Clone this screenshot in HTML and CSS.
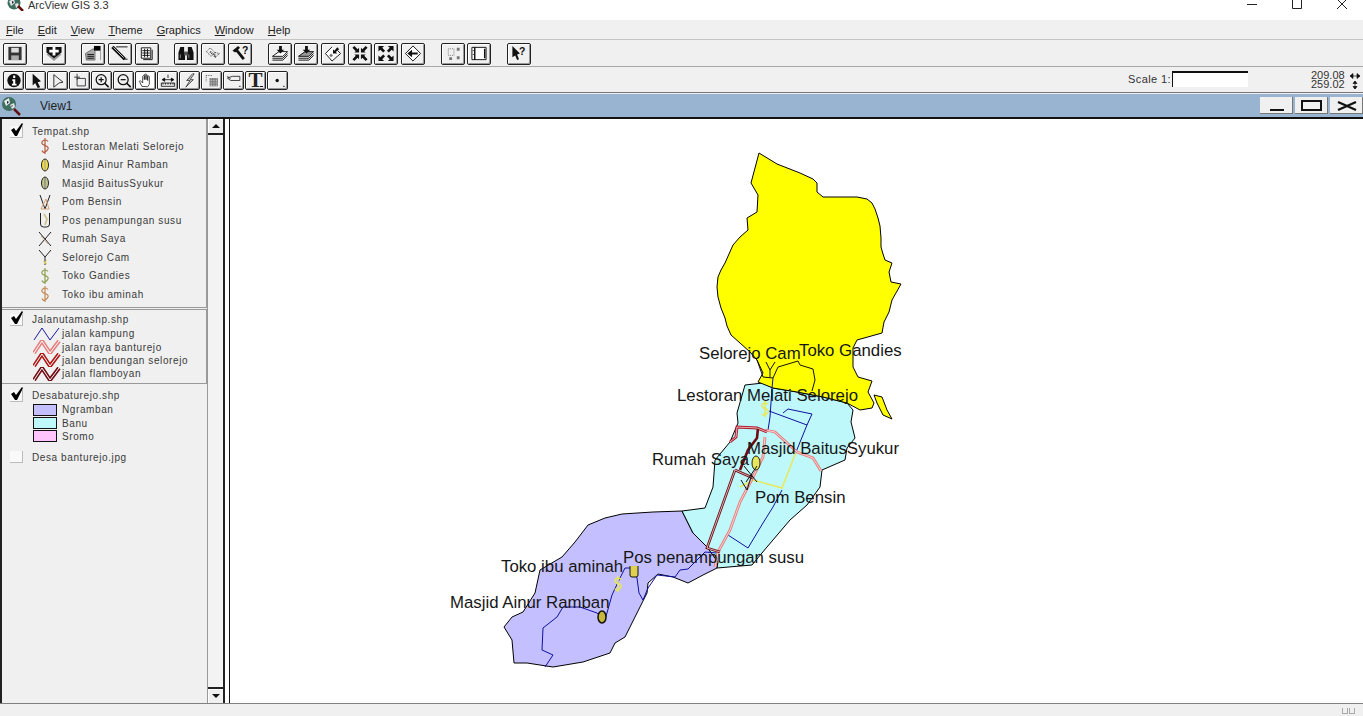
FILE: index.html

```html
<!DOCTYPE html>
<html lang="en">
<head>
  <meta charset="UTF-8">
  <title>ArcView GIS 3.3</title>
  <link rel="stylesheet" href="styles.css">
</head>
<body>

<header class="titlebar">
  <svg class="app-icon" viewBox="0 0 18 11"><circle cx="8" cy="3" r="6.500" fill="#3d6e5e"/><path d="M3 1l5-2 1 4-4 3zM9 4l3-1 1 3-3 2z" fill="#e4e4e4"/><path d="M6 1l2 1-2 2z" fill="#123"/><path d="M12 6l5 5" stroke="#611" stroke-width="2.500"/></svg>
  <span class="app-name">ArcView GIS 3.3</span>
  <div class="win-controls">
    <svg viewBox="0 0 10 10"><path d="M0 4.500h10" stroke="#222"/></svg>
    <svg viewBox="0 0 10 10"><path d="M.5 -2h9v10.500h-9z" fill="none" stroke="#222"/></svg>
    <svg viewBox="0 0 10 10"><path d="M0 -1l10 10M10 -1L0 9" stroke="#222"/></svg>
  </div>
</header>

<nav class="menubar">
  <span><u>F</u>ile</span>
  <span><u>E</u>dit</span>
  <span><u>V</u>iew</span>
  <span><u>T</u>heme</span>
  <span><u>G</u>raphics</span>
  <span><u>W</u>indow</span>
  <span><u>H</u>elp</span>
</nav>

<div class="toolbar buttons">
  <button class="tool"><svg viewBox="0 0 18 18"><path d="M2 2h14v14H2z" fill="#333"/><path d="M5 3h8v5H5z" fill="#ddd"/><path d="M5 11h8v5H5z" fill="#aaa"/></svg></button>
  <button class="tool gap-a"><svg viewBox="0 0 18 18"><path d="M1 10l8 7 8-7-3-2-5 4-5-4z" fill="#999"/><path d="M1 2h16v6l-8 6-8-6z" fill="#111"/><path d="M7.500 2h3v3h3.500v3h-3.500v3h-3V8H4V5h3.500z" fill="#fff"/></svg></button>
  <button class="tool gap-b"><svg viewBox="0 0 18 18"><path d="M1 9l8-5 2 1v11H2z" fill="#aaa" stroke="#333" stroke-width=".6"/><path d="M3 10h7M3 12h7M3 14h7" stroke="#111"/><path d="M10 1h7v5h-7z" fill="#000"/><path d="M11 6v10M17 6v10" stroke="#999"/></svg></button>
  <button class="tool"><svg viewBox="0 0 18 18"><path d="M1 2l13 13" stroke="#111" stroke-width="3.500"/><path d="M2 2.500l11 11" stroke="#ccc"/><path d="M5 2h12" stroke="#111"/><path d="M13 15h4" stroke="#111"/></svg></button>
  <button class="tool"><svg viewBox="0 0 18 18"><path d="M3 3h10v11H3z" fill="#fff" stroke="#111"/><path d="M4 6h8M4 8.500h8M4 11h8M6.500 4v9M9.500 4v9" stroke="#111"/><path d="M14.500 5v10.500H5" fill="none" stroke="#111"/></svg></button>
  <button class="tool gap-b"><svg viewBox="0 0 18 18"><path d="M3 2h4v5l1 1v8H1V8zM11 2h4l2 6v8h-7V8l1-1z" fill="#111"/><path d="M7 7h4v4H7z" fill="#555"/><path d="M3 10v4M12 10v4" stroke="#888"/></svg></button>
  <button class="tool"><svg viewBox="0 0 18 18"><path d="M2 7l4-4 5 5-4 4zM11 8l5 1-5 4z" fill="none" stroke="#333" stroke-dasharray="1 1"/><path d="M6 7l6 6" stroke="#333" stroke-dasharray="1 1" stroke-width="2"/></svg></button>
  <button class="tool"><svg viewBox="0 0 18 18"><path d="M1 6l6-5 2 2-5 5z" fill="#111"/><path d="M5 5l8 10" stroke="#111" stroke-width="3"/><text x="11" y="9" class="ico-q">?</text></svg></button>
  <button class="tool gap-b"><svg viewBox="0 0 18 18"><path d="M1 12l7-5h9l-5 5z" fill="#fff" stroke="#111"/><path d="M1 14h11l5-5M1 16h11l5-5" fill="none" stroke="#111"/><path d="M8 1h3v4h2.500L9.500 9l-4-4H8z" fill="#111"/></svg></button>
  <button class="tool"><svg viewBox="0 0 18 18"><path d="M1 12l7-5h9l-5 5z" fill="#999" stroke="#111"/><path d="M1 14h11l5-5M1 16h11l5-5" fill="none" stroke="#111"/><path d="M8 1h3v4h2.500L9.500 9l-4-4H8z" fill="#111"/></svg></button>
  <button class="tool"><svg viewBox="0 0 18 18"><path d="M8 2L1 9l7 8 9-8-3-3" fill="#fff" stroke="#111"/><path d="M7 9l2 2-2 2-2-2z" fill="#777"/><path d="M9 9V4.500l1.500 1.500 3-3.500 2 2-3.500 3 1.500 1.500z" fill="#111"/></svg></button>
  <button class="tool"><svg viewBox="0 0 18 18"><path d="M8 8H3l1.500-1.500L1 3l2-2 3.500 3.500L8 3zM10 8h5l-1.500-1.500L17 3l-2-2-3.500 3.500L10 3zM8 10H3l1.500 1.500L1 15l2 2 3.500-3.500L8 15zM10 10h5l-1.500 1.500L17 15l-2 2-3.500-3.500L10 15z" fill="#111"/></svg></button>
  <button class="tool"><svg viewBox="0 0 18 18"><path d="M1 1h6L5 3l3 3-2 2-3-3-2 2zM17 1h-6l2 2-3 3 2 2 3-3 2 2zM1 17h6l-2-2 3-3-2-2-3 3-2-2zM17 17h-6l2-2-3-3 2-2 3 3 2-2z" fill="#111"/></svg></button>
  <button class="tool"><svg viewBox="0 0 18 18"><path d="M9 1l8 8-8 8-8-8z" fill="#fff" stroke="#111"/><path d="M3 9l5-4v3h6v2H8v3z" fill="#111"/></svg></button>
  <button class="tool gap-b"><svg viewBox="0 0 18 18"><path d="M4 4h6v7H4z" fill="none" stroke="#777" stroke-dasharray="1 1"/><path d="M13 3h3v3h-3zM13 12h3v3h-3zM5 13h3v3H5z" fill="#777"/></svg></button>
  <button class="tool"><svg viewBox="0 0 18 18"><path d="M1.500 2.500h15v13h-15z" fill="#fff" stroke="#111"/><path d="M4.500 2v14M15 4v10" stroke="#111" stroke-width="1.500"/><path d="M2.500 6h1M2.500 10h1" stroke="#111"/></svg></button>
  <button class="tool gap-b"><svg viewBox="0 0 18 18"><path d="M2 1l8 8-3 1 2 5-2 1-2-5-3 2z" fill="#111"/><text x="9" y="11" class="ico-q">?</text></svg></button>
</div>

<div class="toolbar small">
  <button class="tool"><svg viewBox="0 0 18 18"><circle cx="9" cy="9" r="8" fill="#111"/><path d="M8 3h2.500v3H8zM7 7.500h3.500V13H12v2H6.500v-2H8V9.500H7z" fill="#fff"/></svg></button>
  <button class="tool"><svg viewBox="0 0 18 18"><path d="M5 1l10 9-4 1 3 6-3 1-3-6-3 3z" fill="#111"/></svg></button>
  <button class="tool"><svg viewBox="0 0 18 18"><path d="M4 2l11 9-5 1-1 1-5 4z" fill="#f0f0f0" stroke="#111"/></svg></button>
  <button class="tool"><svg viewBox="0 0 18 18"><path d="M5.500 6.500h10v9h-10z" fill="none" stroke="#222"/><path d="M2 5h7M5.500 1v7" stroke="#222"/></svg></button>
  <button class="tool"><svg viewBox="0 0 18 18"><circle cx="8" cy="8" r="6" fill="none" stroke="#111" stroke-width="1.500"/><path d="M5 8h6M8 5v6" stroke="#111" stroke-width="1.500"/><path d="M12 12l5 5" stroke="#111" stroke-width="2"/></svg></button>
  <button class="tool"><svg viewBox="0 0 18 18"><circle cx="8" cy="8" r="6" fill="none" stroke="#111" stroke-width="1.500"/><path d="M5 8h6" stroke="#111" stroke-width="1.500"/><path d="M12 12l5 5" stroke="#111" stroke-width="2"/></svg></button>
  <button class="tool active"><svg viewBox="0 0 18 18"><path d="M4 16L1 10l1-1 3 3V4l1-1 1 1v4V2l1-1 1 1v6V2.500l1-.5 1 1v6-5l1-.5 1 1v9l-2 3z" fill="#fff" stroke="#111" stroke-width=".9"/></svg></button>
  <button class="tool"><svg viewBox="0 0 18 18"><path d="M1 12h16v4H1z" fill="#f0f0f0" stroke="#111"/><path d="M3 12v2M6 12v2M9 12v2M12 12v2M15 12v2" stroke="#111"/><path d="M2 8h14M2 8l3-2v4zM16 8l-3-2v4zM9 2v4" stroke="#111"/></svg></button>
  <button class="tool"><svg viewBox="0 0 18 18"><path d="M12 1L5 9h4l-5 8 9-9H9l5-7z" fill="none" stroke="#333"/><path d="M11 3L7 8M11 9l-4 5" stroke="#777"/></svg></button>
  <button class="tool"><svg viewBox="0 0 18 18"><path d="M2 3h8M2 3v8" stroke="#444" stroke-dasharray="1 1"/><path d="M6 6h10v10H6z" fill="#777"/><path d="M6 7h10M6 9h10M6 11h10M6 13h10M6 15h10" stroke="#ddd" stroke-dasharray="1 1"/></svg></button>
  <button class="tool"><svg viewBox="0 0 18 18"><path d="M1 6l4 3h11V4H7z" fill="none" stroke="#222"/><path d="M1 4l4 3" stroke="#222"/><path d="M15 16h2" stroke="#111"/></svg></button>
  <button class="tool tool-t">T<i class="dot-mark"></i></button>
  <button class="tool"><svg viewBox="0 0 18 18"><circle cx="8" cy="9" r="2" fill="#111"/><path d="M15 16h2" stroke="#111"/></svg></button>

  <div class="scale">
    <label>Scale 1:</label>
    <span class="scale-box"></span>
  </div>
  <div class="coords">
    <div>209.08 <svg viewBox="0 0 10 8"><path d="M0 4h10M0 4l3-2.500v5zM10 4L7 1.500v5z" fill="#111" stroke="#111" stroke-width=".7"/></svg></div>
    <div>259.02 <svg viewBox="0 0 10 8"><path d="M5 0v8M5 0L3 2.500h4zM5 8L3 5.500h4z" fill="#111" stroke="#111" stroke-width=".7"/></svg></div>
  </div>
</div>

<div class="view-title">
  <svg class="view-icon" viewBox="0 0 20 20"><circle cx="8" cy="8" r="7" fill="#3d6e5e"/><path d="M3 5l5-3 1 5-4 3zM9 9l4-2 1 4-3 2z" fill="#e8e8e8"/><path d="M6 5l2 1-2 2zM10 10l2-1-1 2z" fill="#123"/><path d="M13 13l6 6" stroke="#611" stroke-width="2.500"/></svg>
  <span class="view-name">View1</span>
  <div class="view-buttons">
    <button class="view-btn"><i class="ic-min"></i></button>
    <button class="view-btn"><i class="ic-max"></i></button>
    <button class="view-btn"><svg viewBox="0 0 20 10" width="20" height="10"><path d="M1 1l9 4-9 4M19 1l-9 4 9 4" fill="none" stroke="#111" stroke-width="2.200"/></svg></button>
  </div>
</div>

<main class="workarea">
  <aside class="toc">
    <div class="toc-list">
      <section class="theme first">
        <div class="theme-head"><span class="check"><svg viewBox="0 0 14 14"><path d="M1 7l3-2 2 3 6-8 1 1-6 12H5z" fill="#000"/></svg></span>Tempat.shp</div>
        <div class="pt-row"><span class="pt-sym"><svg viewBox="0 0 14 18"><path class="dollar" stroke="#b25c42" d="M10 4.500Q9 3 7 3T4 5t3 3.500 3 3.500-3 3-3-1.500M7 1v16"/></svg></span>Lestoran Melati Selorejo</div>
        <div class="pt-row"><span class="pt-sym"><svg viewBox="0 0 14 18"><ellipse cx="7" cy="9" rx="3.500" ry="6" fill="#ece04a" stroke="#222"/><path d="M7 4v10" stroke="#a99"/></svg></span>Masjid Ainur Ramban</div>
        <div class="pt-row"><span class="pt-sym"><svg viewBox="0 0 14 18"><ellipse cx="7" cy="9" rx="3.500" ry="6" fill="#c2c58e" stroke="#222"/><path d="M7 4v10" stroke="#777"/></svg></span>Masjid BaitusSyukur</div>
        <div class="pt-row"><span class="pt-sym"><svg viewBox="0 0 14 18"><path d="M2 2l5 14 5-14" fill="none" stroke="#222"/><path d="M3 16l5-10 3 10z" fill="none" stroke="#d9a070"/></svg></span>Pom Bensin</div>
        <div class="pt-row"><span class="pt-sym"><svg viewBox="0 0 14 18"><path d="M2.500 2v11q0 3 3 3h3q3 0 3-3V2" fill="none" stroke="#222"/><path d="M6 3l3 5-2 6" fill="none" stroke="#c8c080" stroke-width="1.500"/></svg></span>Pos penampungan susu</div>
        <div class="pt-row"><span class="pt-sym"><svg viewBox="0 0 14 18"><path d="M1 2l12 14M13 2L1 16" stroke="#222"/><path d="M3 6l7 8" stroke="#d9b090"/></svg></span>Rumah Saya</div>
        <div class="pt-row"><span class="pt-sym"><svg viewBox="0 0 14 18"><path d="M1 2l6 7 6-7M7 9v8" fill="none" stroke="#222"/><path d="M5 13l4 3M9 12l-3 4" stroke="#e7df60"/></svg></span>Selorejo Cam</div>
        <div class="pt-row"><span class="pt-sym"><svg viewBox="0 0 14 18"><path class="dollar" stroke="#8e9e50" d="M10 4.500Q9 3 7 3T4 5t3 3.500 3 3.500-3 3-3-1.500M7 1v16"/></svg></span>Toko Gandies</div>
        <div class="pt-row"><span class="pt-sym"><svg viewBox="0 0 14 18"><path class="dollar" stroke="#c08a58" d="M10 4.500Q9 3 7 3T4 5t3 3.500 3 3.500-3 3-3-1.500M7 1v16"/></svg></span>Toko ibu aminah</div>
      </section>

      <section class="theme lines">
        <div class="theme-head"><span class="check"><svg viewBox="0 0 14 14"><path d="M1 7l3-2 2 3 6-8 1 1-6 12H5z" fill="#000"/></svg></span>Jalanutamashp.shp</div>
        <div class="ln-row"><svg class="ln-sym" viewBox="0 0 28 14"><path d="M1 13L9 1l8 12 9-12" fill="none" stroke="#1a1aa0"/></svg>jalan kampung</div>
        <div class="ln-row"><svg class="ln-sym" viewBox="0 0 28 14"><path d="M1 13L9 1l8 12 9-12" fill="none" stroke="#e88080" stroke-width="4"/><path d="M1 13L9 1l8 12 9-12" fill="none" stroke="#fff" stroke-width="1"/></svg>jalan raya banturejo</div>
        <div class="ln-row"><svg class="ln-sym" viewBox="0 0 28 14"><path d="M1 13L9 1l8 12 9-12" fill="none" stroke="#b01818" stroke-width="4"/><path d="M1 13L9 1l8 12 9-12" fill="none" stroke="#fff" stroke-width="1"/></svg>jalan bendungan selorejo</div>
        <div class="ln-row"><svg class="ln-sym" viewBox="0 0 28 14"><path d="M1 13L9 1l8 12 9-12" fill="none" stroke="#700c14" stroke-width="4"/><path d="M1 13L9 1l8 12 9-12" fill="none" stroke="#fff" stroke-width="1"/></svg>jalan flamboyan</div>
      </section>

      <section class="theme polys">
        <div class="theme-head"><span class="check"><svg viewBox="0 0 14 14"><path d="M1 7l3-2 2 3 6-8 1 1-6 12H5z" fill="#000"/></svg></span>Desabaturejo.shp</div>
        <div class="ln-row"><span class="swatch ngramban"></span>Ngramban</div>
        <div class="ln-row"><span class="swatch banu"></span>Banu</div>
        <div class="ln-row"><span class="swatch sromo"></span>Sromo</div>
      </section>

      <section class="theme image">
        <div class="theme-head"><span class="check"></span>Desa banturejo.jpg</div>
      </section>
    </div>
    <div class="scrollbar">
      <button class="sb-btn"><i class="arrow-up"></i></button>
      <div class="sb-track"></div>
      <button class="sb-btn"><i class="arrow-down"></i></button>
    </div>
  </aside>

  <section class="map">
    <svg class="map-svg" viewBox="230 119 1133 584">
      <!-- villages -->
      <path class="desa ngramban-f" d="M682 511L653 512 622 514 605 518 588 525 575 542 562 557 540 570 535 593 523 612 512 617 504 627 512 640 514 663 527 663 553 667 583 662 610 653 615 643 625 637 637 613 647 593 648 583 658 574 673 577 688 583 703 575 717 568 718 562 707 547 693 533z"/>
      <path class="desa banu-f" d="M745 385L763 383 773 388 797 392 823 397 847 403 853 410 851 422 855 438 847 448 845 460 822 470 820 487 807 505 790 520 767 547 752 565 717 568 718 562 707 547 693 533 682 511 705 508 713 487 715 460 730 442 738 423 737 413z"/>
      <path class="desa yellow-f" d="M759 153L777 164 800 173 813 179 817 183 817 192 823 197 840 197 857 197 867 199 872 203 875 209 878 218 880 226 881 238 881 247 883 254 885 260 892 263 889 272 891 282 901 284 892 300 889 312 884 322 882 333 857 340 853 348 853 367 858 377 872 381 868 392 874 403 872 408 860 410 847 403 823 397 797 392 773 388 758 382 763 373 757 360 750 352 740 343 731 335 727 326 725 318 721 308 718 297 717 287 718 277 721 270 725 263 729 254 733 245 740 237 748 230 747 218 757 212 758 195 751 183z"/>
      <path class="desa yellow-f" d="M874 395L882 397 887 410 892 419 883 415 877 403z"/>
      <path class="thin" d="M757 360L763 377 773 378 778 367 798 361 800 365 813 369 815 380 812 391"/>

      <!-- roads -->
      <g class="road-blue">
        <path d="M545 667L553 655 542 650 543 628 557 617 563 607 580 607 597 613 605 620 612 595 620 578 625 568 632 568 637 578 639 593 643 600 648 588 657 575 675 577 680 570 688 569 705 552 717 553"/>
        <path d="M728 535L748 548 763 523 773 507 782 490"/>
        <path d="M773 378L772 388 770 417 768 430M769 411L807 425 812 414 788 409 783 413M807 425L796 452"/>
      </g>
      <path class="road-yellow" d="M796 452L782 488 753 480 740 487"/>
      <g class="road-pink">
        <path d="M765 430L775 432 797 452 813 458 821 471"/>
        <path d="M765 437L763 457 750 483 740 502 730 530 718 552 715 567"/>
      </g>
      <g class="road-pink-in">
        <path d="M765 430L775 432 797 452 813 458 821 471"/>
        <path d="M765 437L763 457 750 483 740 502 730 530 718 552 715 567"/>
      </g>
      <path class="road-red" d="M730 442L736 437 737 427 757 428 767 432"/>
      <path class="road-dark" d="M758 428L757 438 748 450 740 470M735 470L707 548 720 552M735 470L753 478"/>
      <path class="road-dark-in" d="M730 442L736 437 737 427 757 428 767 432M735 470L707 548 720 552M735 470L753 478"/>

      <!-- point symbols -->
      <path class="thin" d="M766 362L770 370 775 362M770 370V377"/>
      <path class="dollar map-dollar" transform="translate(758 400)" d="M10 4.500Q9 3 7 3T4 5t3 3.500 3 3.500-3 3-3-1.500M7 1v16"/>
      <ellipse cx="756" cy="463" rx="4" ry="7" fill="#e7e75a" stroke="#222"/>
      <ellipse cx="602" cy="617" rx="4" ry="6" fill="#c9b93a" stroke="#111" stroke-width="1.500"/>
      <path class="dollar map-dollar" transform="translate(611 575)" d="M10 4.500Q9 3 7 3T4 5t3 3.500 3 3.500-3 3-3-1.500M7 1v16"/>
      <path d="M630 566v9q0 2 2 2h4q2 0 2-2v-9" fill="#e0d050" stroke="#111"/>
      <path class="thin" d="M741 480L747 490 752 474"/>
      <path class="thin" d="M744 466L757 482M757 466L746 482"/>

      <!-- labels -->
      <text class="label" x="699" y="359">Selorejo Cam</text>
      <text class="label" x="799" y="356">Toko Gandies</text>
      <text class="label" x="677" y="401">Lestoran Melati Selorejo</text>
      <text class="label" x="747" y="454">Masjid BaitusSyukur</text>
      <text class="label" x="652" y="465">Rumah Saya</text>
      <text class="label" x="755" y="503">Pom Bensin</text>
      <text class="label" x="623" y="563">Pos penampungan susu</text>
      <text class="label" x="501" y="572">Toko ibu aminah</text>
      <text class="label" x="450" y="608">Masjid Ainur Ramban</text>
    </svg>
  </section>
</main>

<footer class="statusbar">
  <span class="grip"></span>
  <span class="grip"></span>
</footer>

</body>
</html>
```

FILE: styles.css

```css
* { box-sizing: border-box; }

html, body {
  margin: 0;
  height: 716px;
  overflow: hidden;
}
body {
  background: #f0f0f0;
  color: #222;
  font-family: "Liberation Sans", sans-serif;
  display: flex;
  flex-direction: column;
}

/* main window title */
.titlebar {
  height: 20px;
  background: #fff;
  display: flex;
  align-items: flex-start;
  padding-left: 6px;
}
.app-icon { width: 18px; height: 11px; }
.app-name {
  margin-left: 4px;
  font-size: 11px;
  line-height: 11px;
  color: #333;
}
.win-controls {
  margin-left: auto;
  display: flex;
  gap: 35px;
  padding-right: 16px;
}
.win-controls svg { width: 10px; height: 10px; overflow: hidden; }

.menubar {
  height: 20px;
  display: flex;
  gap: 14px;
  align-items: center;
  padding: 0 0 0 6px;
  font-size: 11px;
  color: #222;
  border-bottom: 1px solid #c4c4c4;
}

/* toolbars */
.toolbar {
  display: flex;
  align-items: center;
  border-bottom: 1px solid #8c8c8c;
}
.buttons {
  height: 27px;
  gap: 2.700px;
  padding: 1px 0 0 3px;
  border-bottom-color: #a8a8a8;
}
.small {
  height: 26px;
  gap: 1px;
  padding: 1px 0 0 3px;
  border-bottom-color: #777;
  margin-bottom: 1px;
}
.tool {
  padding: 0;
  margin: 0;
  background: #f0f0f0;
  border: 1px solid #222;
  border-radius: 2px;
  box-shadow: inset 1px 1px #fff, inset -1px -1px #999;
  display: flex;
  align-items: center;
  justify-content: center;
  flex: none;
}
.buttons .tool { width: 24px; height: 22px; }
.small .tool { width: 21px; height: 19px; }
.tool svg { width: 18px; height: 17px; }
.small .tool svg { width: 16px; height: 15px; }
.tool.active { background: #fff; }
.gap-a { margin-left: 12px; }
.gap-b { margin-left: 13px; }
.tool-t {
  font-family: "Liberation Serif", serif;
  font-size: 21px;
  line-height: 17px;
  font-weight: bold;
  color: #222;
  position: relative;
}
.dot-mark {
  position: absolute;
  right: 2px;
  bottom: 2px;
  width: 3px;
  height: 1px;
  background: #111;
}
.ico-q {
  font-family: "Liberation Sans", sans-serif;
  font-size: 11px;
  font-weight: bold;
  fill: #111;
}

.scale {
  margin-left: auto;
  display: flex;
  align-items: center;
  font-size: 11px;
  color: #333;
  padding-bottom: 2px;
}
.scale label { letter-spacing: 0.4px; }
.scale-box {
  width: 76px;
  height: 16px;
  background: #fff;
  border-top: 2px solid #111;
  border-left: 1px solid #111;
  margin-left: 1px;
}
.coords {
  margin-left: 62px;
  width: 52px;
  font-size: 11px;
  line-height: 9px;
  color: #333;
}
.coords div {
  display: flex;
  align-items: center;
  gap: 5px;
}
.coords svg { width: 10px; height: 8px; }

/* view window */
.view-title {
  height: 23px;
  background: #99b4d1;
  display: flex;
  align-items: center;
  padding-left: 1px;
}
.view-icon { width: 20px; height: 20px; }
.view-name {
  margin-left: 19px;
  font-size: 12px;
  color: #222;
}
.view-buttons {
  margin-left: auto;
  display: flex;
  gap: 2px;
}
.view-btn {
  width: 33px;
  height: 17px;
  padding: 0;
  background: #f0f0f0;
  border: none;
  box-shadow: inset -1px -1px #777;
  display: flex;
  align-items: center;
  justify-content: center;
}
.ic-min {
  width: 14px;
  height: 2px;
  background: #111;
  margin-top: 9px;
}
.ic-max {
  width: 21px;
  height: 11px;
  border: 2px solid #111;
}

.workarea {
  flex: 1;
  min-height: 0;
  display: flex;
  background: #fff;
  border-top: 2px solid #111;
}

/* table of contents */
.toc {
  width: 225px;
  flex: none;
  display: flex;
  background: #f0f0f0;
  border-left: 2px solid #222;
  border-right: 2px solid #222;
  font-size: 10px;
  letter-spacing: 0.6px;
  color: #3a3a3a;
}
.toc-list {
  width: 205px;
  flex: none;
}
.theme { border-right: 1px solid #999; }
.theme.first {
  height: 189px;
  padding-top: 5px;
  border-bottom: 1px solid #999;
}
.theme.lines {
  height: 75px;
  margin-top: 1px;
  border-top: 1px solid #999;
  border-bottom: 1px solid #999;
  padding-top: 2px;
}
.theme.polys {
  height: 64px;
  border: none;
  padding-top: 4px;
}
.theme.image {
  border: none;
  padding-top: 1.500px;
}
.theme-head {
  display: flex;
  align-items: center;
  height: 15px;
  padding-left: 8px;
}
.check {
  width: 13px;
  height: 12px;
  margin-right: 9px;
  background: #f9f9f9;
  border-right: 1px solid #bbb;
  border-bottom: 1px solid #bbb;
  display: block;
}
.check svg { display: block; width: 14px; height: 14px; margin-top: -3px; }
.pt-row {
  height: 18.500px;
  display: flex;
  align-items: center;
  padding-left: 36px;
}
.pt-row:nth-child(2) { margin-top: -2px; }
.pt-sym {
  width: 14px;
  height: 18px;
  margin-right: 10px;
}
.pt-sym svg { width: 14px; height: 18px; display: block; }
.dollar { fill: none; stroke-width: 1.200; }
.map-dollar { stroke: #e7e75a; stroke-width: 1.500; }
.ln-row {
  height: 13.400px;
  display: flex;
  align-items: center;
  padding-left: 31px;
}
.ln-sym {
  width: 28px;
  height: 14px;
  margin-right: 1px;
  flex: none;
}
.swatch {
  width: 24px;
  height: 12px;
  margin-right: 5px;
  border: 1px solid #111;
}
.ngramban { background: #c4c0ff; }
.banu { background: #bef8fb; }
.sromo { background: #ffc4fb; }

.scrollbar {
  width: 16px;
  flex: none;
  display: flex;
  flex-direction: column;
  margin-left: auto;
  border-left: 1px solid #999;
}
.sb-btn {
  height: 16px;
  padding: 0;
  border: none;
  background: #f0f0f0;
  box-shadow: inset 1px 1px #fff;
  display: flex;
  align-items: center;
  justify-content: center;
}
.sb-btn:first-child { border-bottom: 2px solid #222; }
.sb-btn:last-child { border-top: 2px solid #222; }
.sb-track { flex: 1; background: #f3f3f3; }
.arrow-up, .arrow-down {
  width: 0;
  height: 0;
  border-left: 4px solid transparent;
  border-right: 4px solid transparent;
}
.arrow-up { border-bottom: 4px solid #111; }
.arrow-down { border-top: 4px solid #111; }

/* map */
.map {
  flex: 1;
  margin-left: 4px;
  border-left: 1px solid #111;
  min-width: 0;
  background: #fff;
}
.map-svg { width: 100%; height: 100%; display: block; }
.desa { stroke: #000; stroke-width: 1; stroke-linejoin: round; }
.ngramban-f { fill: #c4c0ff; }
.banu-f { fill: #bef8fb; }
.yellow-f { fill: #ffff00; }
.thin { fill: none; stroke: #111; stroke-width: 1; }
.road-blue { fill: none; stroke: #1010a0; stroke-width: 1; }
.road-yellow { fill: none; stroke: #e8e85a; stroke-width: 1.500; }
.road-pink { fill: none; stroke: #e67e7e; stroke-width: 2.800; }
.road-pink-in { fill: none; stroke: #fbe6e6; stroke-width: .8; }
.road-red { fill: none; stroke: #b01828; stroke-width: 2.800; }
.road-dark { fill: none; stroke: #6e0c14; stroke-width: 2.600; }
.road-dark-in { fill: none; stroke: #f4d8d8; stroke-width: .8; }
.label {
  font-family: "Liberation Sans", sans-serif;
  font-size: 16.800px;
  fill: #161616;
}

.statusbar {
  height: 13px;
  background: #f0f0f0;
  border-top: 1px solid #808080;
  display: flex;
  justify-content: flex-end;
  align-items: flex-end;
  gap: 1px;
  padding: 0 8px 2px 0;
}
.grip {
  width: 6px;
  height: 6px;
  border: 1px solid #aaa;
  border-top: none;
}
```
